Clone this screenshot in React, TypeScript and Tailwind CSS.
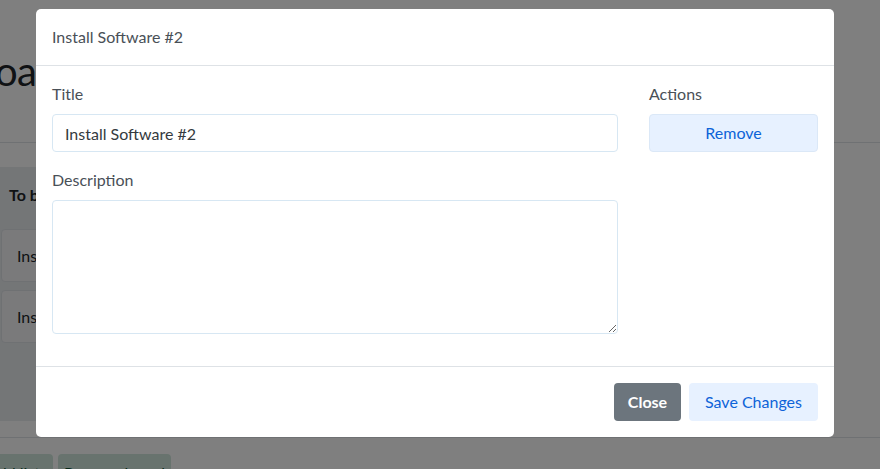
import React from "react";

const App: React.FC = () => {
  return (
    <div className="relative h-[469px] w-[880px] overflow-hidden bg-white font-['Lato',sans-serif] text-[#212529]">
      {/* board page behind the modal */}
      <header className="flex h-[143px] items-center border-b border-[#dee2e6]">
        <h1 className="-ml-[27px] whitespace-nowrap text-[40px] leading-[48px] tracking-[-0.5px] text-[#212529]">
          board
        </h1>
      </header>
      <main className="h-[295px] border-b border-[#dee2e6] pt-6">
        <div className="-ml-[8px] h-[254px] w-[300px] rounded bg-[#e9ecef] px-[9px] pt-4">
          <h2 className="pl-2 text-base font-bold leading-6">To be done</h2>
          <div className="mt-[22px] flex flex-col gap-2">
            <div className="flex h-[53px] items-center rounded border border-[#dee2e6] bg-[#f4f5f7] px-[15px]">
              Install Software #1
            </div>
            <div className="flex h-[53px] items-center rounded border border-[#dee2e6] bg-[#f4f5f7] px-[15px]">
              Install Software #2
            </div>
          </div>
        </div>
      </main>
      <div className="-ml-[26px] flex gap-[5px] pt-4">
        <button className="h-[38px] w-[79px] rounded bg-[#d1e7dd] text-[#0f5132]">Add list</button>
        <button className="h-[38px] w-[113px] rounded bg-[#d1e7dd] text-[#0f5132]">Rename board</button>
      </div>

      {/* backdrop */}
      <div className="absolute inset-0 bg-black/50" />

      {/* modal */}
      <div className="absolute left-[36px] top-[9px] w-[798px] rounded-[5px] bg-white">
        <div className="border-b border-[#dee2e6] px-4 py-4 text-base leading-6 text-[#495057]">
          Install Software #2
        </div>
        <div className="flex gap-[31px] p-4">
          <div className="w-[566px]">
            <label className="block text-base leading-6 text-[#495057]">Title</label>
            <input
              className="mt-2 block h-[38px] w-full rounded border border-[#d7e7f3] px-3 text-base text-[#343a40] outline-none"
              defaultValue="Install Software #2"
            />
            <label className="mt-4 block text-base leading-6 text-[#495057]">Description</label>
            <textarea className="mb-4 mt-2 block h-[134px] w-full rounded border border-[#d7e7f3] px-3 py-2 text-base outline-none" />
          </div>
          <div className="w-[169px]">
            <label className="block text-base leading-6 text-[#495057]">Actions</label>
            <button className="mt-2 block h-[38px] w-full rounded border border-[#dbe8f7] bg-[#e7f1ff] text-base text-[#0d63d8]">
              Remove
            </button>
          </div>
        </div>
        <div className="flex justify-end gap-2 border-t border-[#dee2e6] px-4 py-4">
          <button className="h-[38px] w-[67px] rounded bg-[#6c757d] text-base font-bold text-white">
            Close
          </button>
          <button className="h-[38px] w-[129px] rounded bg-[#e7f1ff] text-base text-[#0d63d8]">
            Save Changes
          </button>
        </div>
      </div>
    </div>
  );
};

export default App;
